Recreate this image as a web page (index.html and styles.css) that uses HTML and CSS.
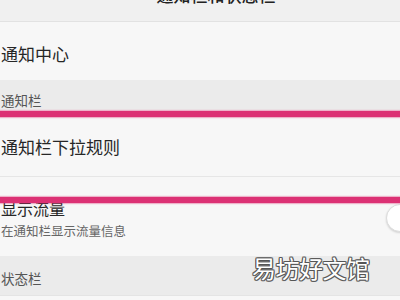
FILE: index.html
```html
<!DOCTYPE html>
<html lang="zh">
   <head>
       <meta charset="UTF-8">
       <meta name="viewport" content="width=device-width, initial-scale=1.0">
       <title>通知栏和状态栏</title>
       <link rel="stylesheet" href="styles.css">
   </head>
   <body>
       <div class="screen">
           <div class="header">
               <h1 class="title">通知栏和状态栏</h1>
           </div>

           <div class="row row-center">
               <span class="label">通知中心</span>
           </div>

           <div class="section">通知栏</div>

           <div class="row row-rule">
               <span class="label">通知栏下拉规则</span>
           </div>

           <div class="row row-switch">
               <div class="texts">
                   <span class="label">显示流量</span>
                   <span class="sub">在通知栏显示流量信息</span>
               </div>
               <span class="knob"></span>
           </div>

           <div class="section section-status">状态栏</div>

           <div class="row row-last"></div>

           <!-- annotation marks drawn over the screenshot -->
           <div class="mark mark-top"></div>
           <div class="mark mark-bottom"></div>
           <div class="watermark">易坊好文馆</div>
       </div>
   </body>
</html>
```

FILE: styles.css
```css
body {
    margin: 0;
    padding: 0;
    font-family: "Noto Sans CJK SC", "Noto Sans", sans-serif;
    background-color: #f7f7f7;
}
.screen {
    position: relative;
    width: 400px;
    height: 300px;
    overflow: hidden;
}
.header {
    height: 21px;
    background-color: #f0f0f0;
    border-bottom: 1px solid #e2e2e2;
    overflow: hidden;
}
.title {
    margin: -15px 0 0 0;
    text-align: center;
    font-size: 17px;
    line-height: 20px;
    font-weight: 500;
    color: #222;
    padding-left: 32px;
}
.row {
    display: flex;
    align-items: center;
    justify-content: space-between;
    background-color: #f7f7f7;
    padding-left: 1px;
}
.row-center {
    height: 58px;
    padding-top: 4px;
    box-sizing: border-box;
}
.label {
    font-size: 17px;
    color: #262626;
}
.section {
    height: 30px;
    box-sizing: border-box;
    padding: 12px 0 0 1px;
    background-color: #ebebeb;
    font-size: 13.5px;
    line-height: 16px;
    color: #555;
}
.row-rule {
    height: 67px;
    padding-top: 6px;
    box-sizing: border-box;
    border-bottom: 1px solid #e6e6e6;
}
.row-switch {
    height: 79px;
    align-items: flex-start;
    padding-top: 20px;
    box-sizing: border-box;
}
.texts {
    display: flex;
    flex-direction: column;
}
.row-switch .label {
    font-size: 16px;
    line-height: 22px;
}
.sub {
    font-size: 12.5px;
    line-height: 18px;
    margin-top: 3px;
    color: #666;
}
.knob {
    width: 26px;
    height: 26px;
    border-radius: 50%;
    background-color: #fff;
    border: 1px solid #dcdcdc;
    box-shadow: 0 1px 2px rgba(0, 0, 0, 0.15);
    margin: 7px -14px 0 0;
}
.section-status {
    height: 40px;
    padding-top: 14px;
    border-bottom: 1px solid #e4e4e4;
}
.row-last {
    height: 10px;
}
.mark {
    position: absolute;
    left: 0;
    width: 400px;
    height: 6px;
    background-color: #dc3174;
    box-shadow: 0 0 1px 1px rgba(220, 49, 116, 0.35);
}
.mark-top {
    top: 111px;
}
.mark-bottom {
    top: 197px;
}
.watermark {
    position: absolute;
    left: 252px;
    top: 252px;
    font-size: 24px;
    line-height: 32px;
    letter-spacing: -0.5px;
    color: #fff;
    font-weight: 400;
    text-shadow: 1px 0 0 #555, -1px 0 0 #555, 0 1px 0 #555, 0 -1px 0 #555,
        1px 1px 0 #777, -1px -1px 0 #777, 1px -1px 0 #777, -1px 1px 0 #777;
}
```
